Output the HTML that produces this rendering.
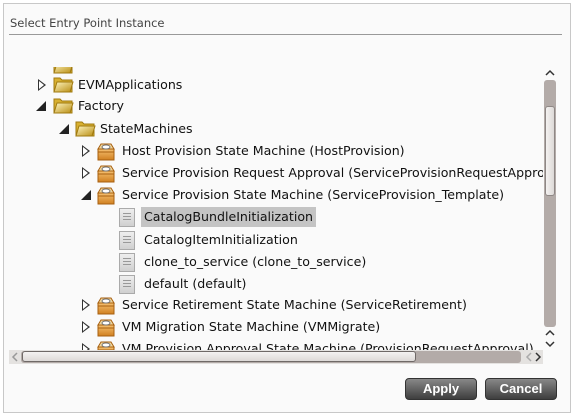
<!DOCTYPE html>
<html><head><meta charset="utf-8"><style>
*{margin:0;padding:0;box-sizing:border-box}
body{width:574px;height:417px;background:#fff;font-family:"DejaVu Sans","Liberation Sans",sans-serif;position:relative;overflow:hidden}
#dlg{position:absolute;left:3px;top:3px;width:568px;height:410px;border:1px solid #c8c8c8;background:#fafafa}
#title{position:absolute;left:10px;top:16px;font-size:11.5px;color:#444}
#hr{position:absolute;left:9px;top:34px;width:553px;height:1px;background:#999}
#tree{position:absolute;left:9px;top:67px;width:534px;height:283px;overflow:hidden;background:#fafafa}
.r{position:absolute;height:20px;font-size:12.6px;color:#111;white-space:nowrap;line-height:20px}
.r span.t{position:absolute;top:0}
.sel{background:#c4c4c4;padding:0 3px}
.tri-o{position:absolute;width:0;height:0;border-top:6px solid transparent;border-bottom:6px solid transparent;border-left:8px solid #333;top:4px}
.tri-o::after{content:"";position:absolute;left:-7px;top:-4px;border-top:4px solid transparent;border-bottom:4px solid transparent;border-left:5px solid #fff}
.tri-x{position:absolute;width:0;height:0;border-left:10px solid transparent;border-bottom:10px solid #222;top:5px}
.fold{position:absolute;top:1px;width:21px;height:17px}
.box{position:absolute;top:0;width:20px;height:20px}
.doc{position:absolute;top:1px;width:16px;height:19px;border:1px solid #aaa;background:linear-gradient(#eee,#d0d0d0)}
.doc::after{content:"";position:absolute;left:3px;top:4px;width:8px;height:9px;background:repeating-linear-gradient(#999 0 1px,transparent 1px 3px)}
#vs{position:absolute;left:543px;top:67px;width:14px;height:283px;background:#fafafa}
#vtrack{position:absolute;left:1px;top:13px;width:12px;height:247px;background:#b3aba8;border-radius:3px}
#vthumb{position:absolute;left:2px;top:39px;width:10px;height:90px;background:linear-gradient(90deg,#f4f2f1,#ddd9d7);border-radius:3px;border:1px solid #8e8785}
#hs{position:absolute;left:9px;top:350px;width:534px;height:14px;background:#e4e2e0}
#htrack{position:absolute;left:12px;top:1px;width:500px;height:12px;background:#b3aba8;border-radius:3px}
#hthumb{position:absolute;left:13px;top:1px;width:394px;height:11px;background:linear-gradient(#f4f2f1,#ddd9d7);border-radius:3px;border:1px solid #6f6967}
.btn{position:absolute;top:378px;width:72px;height:22px;border-radius:4px;background:linear-gradient(#888,#3e3e3e);border:1px solid #333;color:#fff;font-size:13px;font-weight:bold;text-align:center;line-height:20px;font-family:"Liberation Sans",sans-serif}
.sv{position:absolute}
</style></head><body>
<div id="dlg"></div>
<div id="title">Select Entry Point Instance</div>
<div id="hr"></div>
<svg width="0" height="0" style="position:absolute"><defs>
<linearGradient id="fg" x1="0" y1="0" x2="1" y2="1"><stop offset="0" stop-color="#fff6c0"/><stop offset="1" stop-color="#b88c10"/></linearGradient>
<linearGradient id="bg" x1="0" y1="0" x2="0" y2="1"><stop offset="0" stop-color="#f5c070"/><stop offset="1" stop-color="#d08020"/></linearGradient>
<symbol id="F" viewBox="0 0 21 17"><path d="M1 2h6l2 2h10v12H1z" fill="#d8b030" stroke="#a07a10"/><path d="M4 6h16l-3 10H1z" fill="url(#fg)" stroke="#a07a10"/></symbol>
<symbol id="B" viewBox="0 0 20 20"><path d="M2 8h16v11H2z" fill="url(#bg)" stroke="#a86010"/><path d="M2 8l3-5h10l3 5z" fill="#f0d8a0" stroke="#a86010"/><ellipse cx="10" cy="6" rx="4" ry="2" fill="#fff" stroke="#777"/><path d="M2 11h16" stroke="#a86010"/></symbol>
</defs></svg>
<div id="tree">
<div class="r" style="top:-11px"><svg class="fold" style="left:44px"><use href="#F"/></svg></div>
<div class="r" style="top:8px;width:534px"><div class="tri-o" style="left:29px"></div><svg class="fold" style="left:44px"><use href="#F"/></svg><span class="t" style="left:69px">EVMApplications</span></div>
<div class="r" style="top:29px;width:534px"><div class="tri-x" style="left:27px"></div><svg class="fold" style="left:44px"><use href="#F"/></svg><span class="t" style="left:69px">Factory</span></div>
<div class="r" style="top:52px;width:534px"><div class="tri-x" style="left:50px"></div><svg class="fold" style="left:66px"><use href="#F"/></svg><span class="t" style="left:91px">StateMachines</span></div>
<div class="r" style="top:74px;width:534px"><div class="tri-o" style="left:73px"></div><svg class="box" style="left:87px"><use href="#B"/></svg><span class="t" style="left:113px">Host Provision State Machine (HostProvision)</span></div>
<div class="r" style="top:96px;width:534px"><div class="tri-o" style="left:73px"></div><svg class="box" style="left:87px"><use href="#B"/></svg><span class="t" style="left:113px">Service Provision Request Approval (ServiceProvisionRequestApproval)</span></div>
<div class="r" style="top:118px;width:534px"><div class="tri-x" style="left:72px"></div><svg class="box" style="left:87px"><use href="#B"/></svg><span class="t" style="left:113px">Service Provision State Machine (ServiceProvision_Template)</span></div>
<div class="r" style="top:140px;width:534px"><div class="doc" style="left:110px"></div><span class="t sel" style="left:132px">CatalogBundleInitialization</span></div>
<div class="r" style="top:163px;width:534px"><div class="doc" style="left:110px"></div><span class="t" style="left:135px">CatalogItemInitialization</span></div>
<div class="r" style="top:185px;width:534px"><div class="doc" style="left:110px"></div><span class="t" style="left:135px">clone_to_service (clone_to_service)</span></div>
<div class="r" style="top:207px;width:534px"><div class="doc" style="left:110px"></div><span class="t" style="left:135px">default (default)</span></div>
<div class="r" style="top:228px;width:534px"><div class="tri-o" style="left:73px"></div><svg class="box" style="left:87px"><use href="#B"/></svg><span class="t" style="left:113px">Service Retirement State Machine (ServiceRetirement)</span></div>
<div class="r" style="top:250px;width:534px"><div class="tri-o" style="left:73px"></div><svg class="box" style="left:87px"><use href="#B"/></svg><span class="t" style="left:113px">VM Migration State Machine (VMMigrate)</span></div>
<div class="r" style="top:272px;width:534px"><div class="tri-o" style="left:73px"></div><svg class="box" style="left:87px"><use href="#B"/></svg><span class="t" style="left:113px">VM Provision Approval State Machine (ProvisionRequestApproval)</span></div>
</div>
<div id="vs"><svg class="sv" style="left:2px;top:2px" width="10" height="8"><path d="M1 6l4-4 4 4" fill="none" stroke="#333" stroke-width="1.5"/></svg><div id="vtrack"></div><div id="vthumb"></div><svg class="sv" style="left:2px;top:262px" width="10" height="8"><path d="M1 6l4-4 4 4" fill="none" stroke="#333" stroke-width="1.5"/></svg><svg class="sv" style="left:2px;top:273px" width="10" height="8"><path d="M1 2l4 4 4-4" fill="none" stroke="#333" stroke-width="1.5"/></svg></div>
<div id="hs"><svg class="sv" style="left:2px;top:2px" width="8" height="10"><path d="M6 1L2 5l4 4" fill="none" stroke="#999" stroke-width="1.5"/></svg><div id="htrack"></div><div id="hthumb"></div><svg class="sv" style="left:516px;top:2px" width="8" height="10"><path d="M6 1L2 5l4 4" fill="none" stroke="#aaa" stroke-width="1.5"/></svg><svg class="sv" style="left:525px;top:2px" width="8" height="10"><path d="M2 1l4 4-4 4" fill="none" stroke="#333" stroke-width="1.5"/></svg></div>
<div class="btn" style="left:405px">Apply</div>
<div class="btn" style="left:485px">Cancel</div>
</body></html>
